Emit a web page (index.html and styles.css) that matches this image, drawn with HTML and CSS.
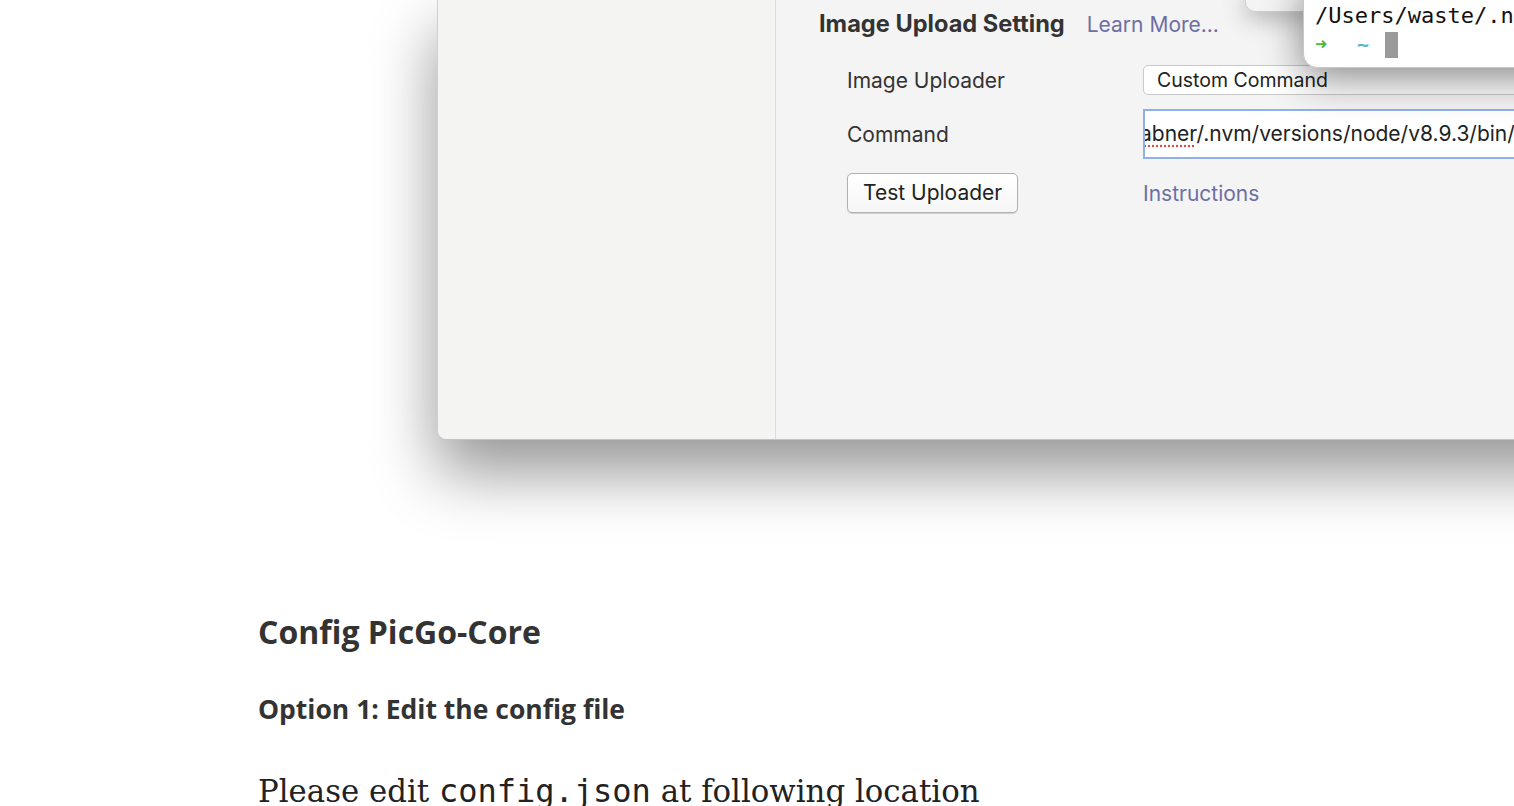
FILE: index.html
```html
<!DOCTYPE html>
<html>
<head>
<meta charset="utf-8">
<link rel="stylesheet" href="styles.css">
</head>
<body>
<div class="figure">
  <div class="window">
    <div class="sidebar"></div>
    <div class="main">
      <div class="section-head">
        <span class="section-title">Image Upload Setting</span>
        <span class="link">Learn More...</span>
      </div>
      <div class="form">
        <div class="label">Image Uploader</div>
        <div class="select">Custom Command</div>
        <div class="label">Command</div>
        <div class="input"><span class="typo">abner</span>/.nvm/versions/node/v8.9.3/bin/picgo upload</div>
        <div><span class="button">Test Uploader</span></div>
        <div class="link">Instructions</div>
      </div>
    </div>
  </div>
  <div class="panel"></div>
  <div class="terminal">
    <div class="term-line">/Users/waste/.nvm/versions/node</div>
    <div class="term-line"><span class="arrow">➜</span><span class="tilde">~</span><span class="cursor"></span></div>
  </div>
</div>
<div class="article">
  <h2>Config PicGo-Core</h2>
  <h3>Option 1: Edit the config file</h3>
  <p>Please edit <code>config.json</code> at following location</p>
</div>
</body>
</html>
```
FILE: styles.css
```css
html, body {
  margin: 0;
  padding: 0;
  background: #ffffff;
  overflow: hidden;
}
.figure {
  position: relative;
  height: 580px;
  overflow: hidden;
}
.window {
  margin-left: 437px;
  width: 1200px;
  height: 440px;
  display: flex;
  background: #f4f4f4;
  border-bottom: 1px solid #c4c4c4;
  border-left: 1px solid #d0d0d0;
  border-bottom-left-radius: 9px;
  box-shadow: 0 32px 64px rgba(0, 0, 0, 0.42);
  box-sizing: border-box;
  font-family: Inter, "Liberation Sans", sans-serif;
  color: #2f2f2f;
}
.sidebar {
  width: 337px;
  flex: none;
  border-right: 1px solid #dcdcdc;
  background: #f4f4f3;
  border-bottom-left-radius: 9px;
}
.main {
  flex: 1;
  padding-left: 43px;
}
.section-head {
  display: flex;
  align-items: baseline;
  gap: 22px;
  padding-top: 9px;
}
.section-title {
  font-weight: 700;
  font-size: 23.6px;
  color: #333;
}
.link {
  color: #6d6fa3;
  font-size: 21px;
}
.form {
  display: grid;
  grid-template-columns: 296px 1fr;
  grid-template-rows: 30px 50px 40px;
  row-gap: 14px;
  padding-left: 28px;
  margin-top: 27px;
  align-items: center;
}
.label {
  font-size: 21px;
  color: #333;
}
.select {
  height: 30px;
  box-sizing: border-box;
  background: #fff;
  border: 1px solid #c9c9c9;
  border-radius: 5px;
  font-size: 19.5px;
  line-height: 28px;
  padding-left: 13px;
  color: #222;
}
.input {
  height: 50px;
  box-sizing: border-box;
  background: #fff;
  border: 2px solid #8fb0e8;
  font-size: 21px;
  line-height: 45px;
  white-space: nowrap;
  overflow: hidden;
  text-indent: -5px;
  color: #222;
}
.typo {
  text-decoration: underline dotted #e0443a;
  text-underline-offset: 4px;
}
.button {
  display: inline-block;
  height: 40px;
  box-sizing: border-box;
  padding: 0 15px;
  line-height: 38px;
  font-size: 21px;
  color: #222;
  background: linear-gradient(#ffffff, #f6f6f6);
  border: 1px solid #b0b0b0;
  border-radius: 5px;
  box-shadow: 0 1px 1px rgba(0, 0, 0, 0.15);
}
.panel {
  position: absolute;
  left: 1245px;
  top: -10px;
  width: 80px;
  height: 20px;
  background: #f4f4f4;
  border: 1px solid #cfcfcf;
  border-radius: 10px;
  box-shadow: 0 6px 24px rgba(0, 0, 0, 0.3);
}
.terminal {
  position: absolute;
  left: 1303px;
  top: -20px;
  width: 320px;
  height: 88px;
  box-sizing: border-box;
  background: #ffffff;
  border: 1px solid #c8c8c8;
  border-radius: 14px;
  box-shadow: 0 10px 40px rgba(0, 0, 0, 0.48);
  padding: 20px 0 0 11px;
  font-family: "DejaVu Sans Mono", "Liberation Mono", monospace;
  font-size: 22px;
  color: #111;
}
.term-line {
  height: 29px;
  line-height: 29px;
  white-space: nowrap;
  display: flex;
  align-items: center;
}
.arrow {
  color: #4cb83a;
  font-size: 20px;
  font-weight: 700;
  width: 42px;
}
.tilde {
  color: #4fb8c8;
  font-size: 20px;
  font-weight: 700;
  width: 28px;
}
.cursor {
  display: inline-block;
  width: 13px;
  height: 26px;
  background: #9a9a9a;
}
.article {
  padding-left: 258px;
  color: #333;
}
h2 {
  margin: 30px 0 0;
  font-family: "Open Sans", sans-serif;
  font-weight: 700;
  font-size: 32px;
  line-height: 44px;
}
h3 {
  margin: 38px 0 0;
  font-family: "Open Sans", sans-serif;
  font-weight: 700;
  font-size: 26.5px;
  line-height: 34px;
}
p {
  margin: 42px 0 0;
  font-family: "DejaVu Serif", serif;
  font-size: 30.8px;
  line-height: 46px;
  color: #222;
}
code {
  font-family: "DejaVu Sans Mono", monospace;
  font-size: 32px;
}
```
